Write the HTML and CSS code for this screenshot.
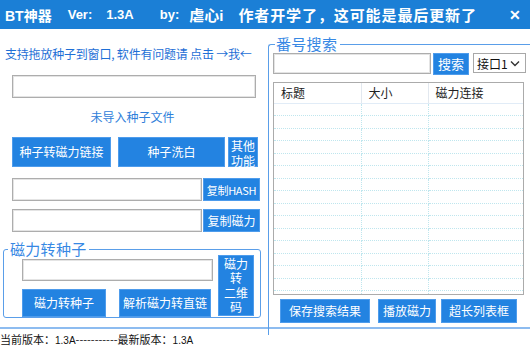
FILE: index.html
```html
<!DOCTYPE html>
<html lang="zh-CN">
<head>
    <meta charset="UTF-8">
    <title>BT神器</title>
    <link rel="stylesheet" href="styles.css">
</head>
<body>
    <div class="titlebar">
        <span class="t-name">BT神器</span>
        <span class="t-label t-ver">Ver:</span>
        <span class="t-num">1.3A</span>
        <span class="t-label t-by">by:</span>
        <span class="t-author">虐心i</span>
        <span class="t-msg">作者开学了，这可能是最后更新了</span>
        <span class="t-close">✕</span>
    </div>

    <div class="main">
        <div class="left">
            <div class="hint">支持拖放种子到窗口, 软件有问题请 点击 →我←</div>
            <input type="text" class="field file-field">
            <div class="file-state">未导入种子文件</div>

            <div class="btn-row">
                <button class="btn btn-convert">种子转磁力链接</button>
                <button class="btn btn-clean">种子洗白</button>
                <button class="btn btn-other">其他<br>功能</button>
            </div>

            <div class="copy-row">
                <input type="text" class="field copy-field">
                <button class="btn btn-copy btn-hash">复制HASH</button>
            </div>
            <div class="copy-row second">
                <input type="text" class="field copy-field">
                <button class="btn btn-copy">复制磁力</button>
            </div>

            <fieldset class="group group-magnet">
                <legend>磁力转种子</legend>
                <div class="magnet-body">
                    <div class="magnet-col">
                        <input type="text" class="field magnet-field">
                        <div class="magnet-btns">
                            <button class="btn btn-tor">磁力转种子</button>
                            <button class="btn btn-direct">解析磁力转直链</button>
                        </div>
                    </div>
                    <button class="btn btn-qr">磁力<br>转<br>二维<br>码</button>
                </div>
            </fieldset>
        </div>

        <div class="right">
            <fieldset class="group group-search">
                <legend>番号搜索</legend>
                <div class="search-row">
                    <input type="text" class="field search-field">
                    <button class="btn btn-search">搜索</button>
                    <div class="select">
                        <span>接口1</span>
                        <svg width="10" height="7" viewBox="0 0 10 7"><path d="M1 1.5 L5 5.5 L9 1.5" fill="none" stroke="#333" stroke-width="1.4"/></svg>
                    </div>
                </div>

                <div class="result-box">
                    <table class="results">
                        <thead>
                            <tr><th class="c-title">标题</th><th class="c-size">大小</th><th class="c-link">磁力连接</th></tr>
                        </thead>
                        <tbody>
                            <tr><td></td><td></td><td></td></tr>
                            <tr><td></td><td></td><td></td></tr>
                            <tr><td></td><td></td><td></td></tr>
                            <tr><td></td><td></td><td></td></tr>
                            <tr><td></td><td></td><td></td></tr>
                            <tr><td></td><td></td><td></td></tr>
                            <tr><td></td><td></td><td></td></tr>
                            <tr><td></td><td></td><td></td></tr>
                            <tr><td></td><td></td><td></td></tr>
                            <tr><td></td><td></td><td></td></tr>
                            <tr><td></td><td></td><td></td></tr>
                            <tr><td></td><td></td><td></td></tr>
                            <tr><td></td><td></td><td></td></tr>
                            <tr><td></td><td></td><td></td></tr>
                            <tr><td></td><td></td><td></td></tr>
                            <tr><td></td><td></td><td></td></tr>
                        </tbody>
                    </table>
                </div>

                <div class="result-btns">
                    <button class="btn btn-save">保存搜索结果</button>
                    <button class="btn btn-play">播放磁力</button>
                    <button class="btn btn-long">超长列表框</button>
                </div>
            </fieldset>
        </div>
    </div>

    <div class="divider"></div>
    <div class="statusbar">当前版本：<span class="num">1.3A</span>-----------最新版本：<span class="num">1.3A</span></div>
</body>
</html>
```

FILE: styles.css
```css
* {
    box-sizing: border-box;
}
body {
    margin: 0;
    width: 530px;
    height: 346px;
    overflow: hidden;
    background-color: white;
    font-family: "Noto Sans CJK SC", "Liberation Sans", sans-serif;
    font-size: 12px;
    color: #111;
}
.titlebar {
    height: 29px;
    display: flex;
    align-items: center;
    padding-left: 5px;
    background-color: #1b7fd6;
    color: white;
    font-family: "Liberation Sans", "Noto Sans CJK SC", sans-serif;
    font-weight: bold;
    font-size: 14px;
    white-space: nowrap;
}
.t-label,
.t-num {
    font-size: 13px;
}
.t-ver {
    margin-left: 16px;
}
.t-num {
    margin-left: 14px;
}
.t-by {
    margin-left: 26px;
}
.t-author {
    margin-left: 10px;
    font-size: 15px;
}
.t-msg {
    margin-left: 15px;
    font-size: 15px;
    letter-spacing: 0.9px;
}
.t-close {
    margin-left: auto;
    margin-right: 9px;
    font-size: 14px;
}

.main {
    display: flex;
    height: 298px;
}
.left {
    width: 265px;
    flex: none;
}
.right {
    flex: 1;
    min-width: 0;
}

.field {
    display: block;
    border: 1px solid #adadad;
    box-shadow: inset 0 0 0 1px #e4e4e4;
    background: white;
    padding: 0;
    margin: 0;
    outline: none;
}
.btn {
    border: 1px solid #4e9cec;
    background-color: #2383e1;
    color: white;
    font-family: "Noto Sans CJK SC", sans-serif;
    font-size: 12px;
    line-height: 14px;
    padding: 0;
    margin: 0;
    white-space: nowrap;
    cursor: pointer;
}

.hint {
    margin: 17px 0 0 5px;
    line-height: 16px;
    color: #1e6fd6;
    white-space: nowrap;
    letter-spacing: -0.2px;
}
.file-field {
    margin: 13px 0 0 12px;
    width: 244px;
    height: 23px;
}
.file-state {
    margin-top: 11px;
    line-height: 16px;
    text-align: center;
    color: #2f80da;
}
.btn-row {
    display: flex;
    margin: 12px 0 0 12px;
    height: 30px;
}
.btn-convert {
    width: 99px;
}
.btn-clean {
    width: 107px;
    margin-left: 7px;
}
.btn-other {
    width: 30px;
    margin-left: 3px;
    line-height: 15px;
}
.copy-row {
    display: flex;
    margin: 11px 0 0 12px;
    height: 23px;
}
.copy-row.second {
    margin-top: 8px;
}
.copy-field {
    width: 190px;
    height: 23px;
}
.btn-copy {
    width: 57px;
    margin-left: 1px;
}
.btn-hash {
    font-size: 11px;
    letter-spacing: -0.3px;
}

.group {
    border: 1px solid #5a9ee9;
    border-radius: 3px;
    padding: 0;
    min-width: 0;
}
.group legend {
    padding: 0 2px;
    margin-left: 4px;
    font-size: 15px;
    line-height: 12px;
    color: #3788e4;
    letter-spacing: 0.3px;
}
.group-magnet {
    margin: 11px 0 0 3px;
    width: 258px;
    height: 75px;
}
.magnet-body {
    display: flex;
    padding-left: 18px;
}
.magnet-field {
    margin-top: 4px;
    width: 191px;
    height: 22px;
}
.magnet-btns {
    display: flex;
    margin-top: 8px;
    height: 28px;
}
.btn-tor {
    width: 84px;
}
.btn-direct {
    width: 92px;
    margin-left: 13px;
}
.btn-qr {
    width: 36px;
    height: 61px;
    margin-left: 5px;
    line-height: 14.5px;
}

.group-search {
    margin: 8px -6px 0 3px;
    height: 298px;
    border-bottom: none;
    border-right: none;
    border-radius: 3px 0 0 0;
}
.group-search legend {
    line-height: 14px;
    margin-left: 6px;
    padding: 0 3px 0 1px;
}
.search-row {
    display: flex;
    align-items: flex-start;
    margin: 2px 0 0 4px;
}
.search-field {
    width: 158px;
    height: 21px;
}
.btn-search {
    width: 36px;
    height: 22px;
    margin-left: 2px;
    font-size: 13px;
}
.select {
    display: flex;
    align-items: center;
    justify-content: space-between;
    width: 53px;
    height: 20px;
    margin-left: 4px;
    padding: 0 5px 0 3px;
    border: 1px solid #a8a8a8;
    background: white;
    font-size: 12px;
}

.result-box {
    margin: 7px 0 0 4px;
    width: 251px;
    height: 213px;
    border: 1px solid #ababab;
    overflow: hidden;
}
.results {
    width: 100%;
    border-collapse: collapse;
    table-layout: fixed;
}
.results th {
    height: 20px;
    padding: 0 0 0 7px;
    text-align: left;
    font-weight: normal;
    color: #222;
    border-right: 1px solid #e2e8ef;
    border-bottom: 1px solid #e1ecf7;
}
.c-title {
    width: 87px;
}
.c-size {
    width: 67px;
}
.results td {
    height: 12.5px;
    padding: 0;
    border-right: 1px dotted #bfe6ee;
    border-bottom: 1px dotted #bfe6ee;
}
.results td:last-child,
.results th:last-child {
    border-right: none;
}

.result-btns {
    display: flex;
    margin: 4px 0 0 11px;
    height: 24px;
}
.btn-save {
    width: 90px;
}
.btn-play {
    width: 58px;
    margin-left: 8px;
}
.btn-long {
    width: 76px;
    margin-left: 5px;
}

.divider {
    height: 2px;
    background-color: #8dbcf0;
}
.statusbar {
    padding: 2px 0 0 0;
    line-height: 16px;
    font-size: 11px;
    white-space: nowrap;
}
.statusbar .num {
    font-family: "Liberation Sans", sans-serif;
    font-size: 10px;
}
```
